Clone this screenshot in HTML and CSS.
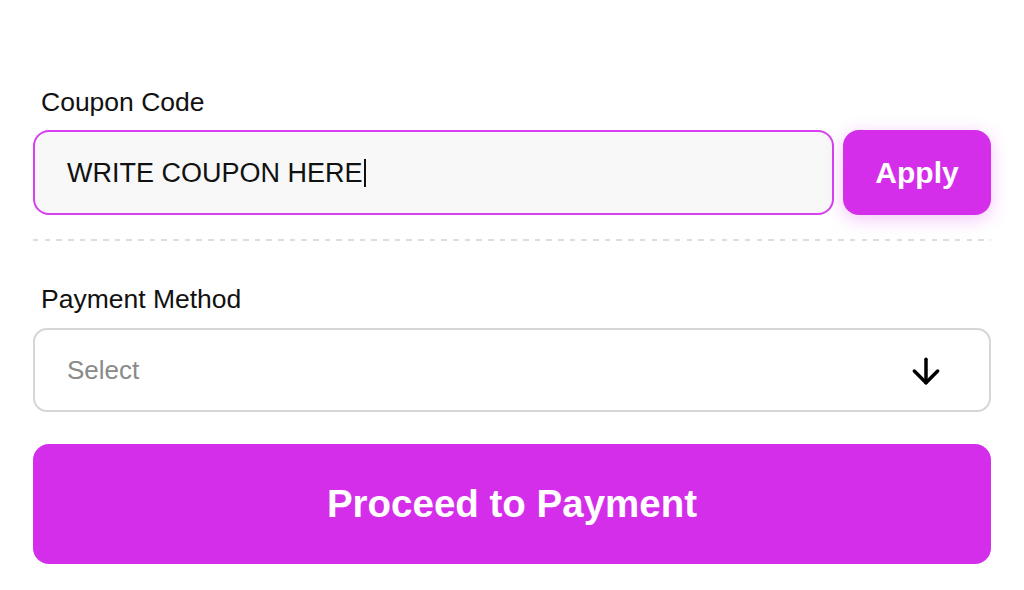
FILE: index.html
```html
<!DOCTYPE html>
<html lang="en">
<head>
<meta charset="utf-8">
<title>Checkout</title>
<link rel="stylesheet" href="styles.css">
</head>
<body>
<main class="checkout">
  <section class="field">
    <label class="field-label">Coupon Code</label>
    <div class="coupon-row">
      <div class="coupon-input"><span class="coupon-text">WRITE COUPON HERE</span><span class="caret"></span></div>
      <button class="apply-btn" type="button">Apply</button>
    </div>
  </section>
  <hr class="divider">
  <section class="field">
    <label class="field-label field-label-payment">Payment Method</label>
    <div class="select-box">
      <span class="select-placeholder">Select</span>
      <svg class="select-arrow" viewBox="0 0 24 24" width="40" height="40" aria-hidden="true">
        <line x1="12" y1="5" x2="12" y2="19"/>
        <polyline points="19 12 12 19 5 12"/>
      </svg>
    </div>
  </section>
  <button class="proceed-btn" type="button">Proceed to Payment</button>
</main>
</body>
</html>
```
FILE: styles.css
```css
* {
  box-sizing: border-box;
}

html, body {
  margin: 0;
  padding: 0;
  background: #ffffff;
}

body {
  font-family: "Liberation Sans", Helvetica, Arial, sans-serif;
  color: #111111;
}

.checkout {
  padding: 86px 33px 0;
  display: flex;
  flex-direction: column;
}

.field {
  display: flex;
  flex-direction: column;
}

.field-label {
  font-size: 26.5px;
  line-height: 32px;
  padding-left: 8px;
  margin-bottom: 12px;
  color: #111111;
}

.field-label-payment {
  margin-bottom: 13px;
}

.coupon-row {
  display: flex;
  gap: 9px;
  height: 85px;
}

.coupon-input {
  flex: 1;
  display: flex;
  align-items: center;
  border: 2px solid #d640ee;
  border-radius: 16px;
  background: #f8f8f8;
  padding: 0 32px;
  font-size: 27px;
  color: #111111;
}

.coupon-text {
  margin-top: 1px;
}

.caret {
  display: inline-block;
  width: 2px;
  height: 28px;
  margin-left: 1px;
  background: #111111;
}

.apply-btn {
  width: 148px;
  border: none;
  border-radius: 16px;
  background: #d42eeb;
  color: #ffffff;
  font-family: inherit;
  font-weight: 700;
  font-size: 30px;
  box-shadow: 0 4px 18px rgba(212, 46, 235, 0.28);
  padding: 0;
}

.divider {
  margin: 24px 0 42px;
  height: 2px;
  border: none;
  background: repeating-linear-gradient(90deg, #dddddd 0 5.5px, transparent 5.5px 11.67px);
}

.select-box {
  height: 84px;
  display: flex;
  align-items: center;
  justify-content: space-between;
  border: 2px solid #d6d6d6;
  border-radius: 14px;
  background: #ffffff;
  padding: 0 43px 0 32px;
}

.select-placeholder {
  font-size: 26px;
  color: #8a8a8a;
}

.select-arrow {
  fill: none;
  stroke: #000000;
  stroke-width: 2.1;
  stroke-linecap: round;
  stroke-linejoin: round;
  margin-top: 2px;
}

.proceed-btn {
  margin-top: 32px;
  height: 120px;
  border: none;
  border-radius: 16px;
  background: #d42eeb;
  color: #ffffff;
  font-family: inherit;
  font-weight: 700;
  font-size: 38.5px;
  padding: 0;
}
```
